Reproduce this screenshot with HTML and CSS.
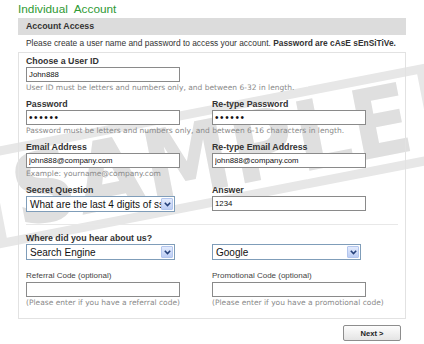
FILE: index.html
```html
<!DOCTYPE html>
<html>
<head>
  <title>Individual Account</title>
  <link rel="stylesheet" href="styles.css">
</head>
<body>
  <!-- Stamp behind the form -->
  <div class="watermark"><span>SAMPLE</span></div>

  <div class="page">
    <h1 class="page-title">Individual&nbsp; Account</h1>

    <div class="section">
      <div class="section-head">Account Access</div>
      <p class="intro">Please create a user name and password to access your account. <b>Password are cAsE sEnSiTiVe.</b></p>

      <div class="panel">
        <div class="row">
          <div class="field">
            <label>Choose a User ID</label>
            <input type="text" value="John888">
          </div>
          <div class="hint wide">User ID must be letters and numbers only, and between 6-32 in length.</div>
        </div>

        <div class="row">
          <div class="field">
            <label>Password</label>
            <input type="password" value="123456">
          </div>
          <div class="field">
            <label>Re-type Password</label>
            <input type="password" value="123456">
          </div>
          <div class="hint wide">Password must be letters and numbers only, and between 6-16 characters in length.</div>
        </div>

        <div class="row">
          <div class="field">
            <label>Email Address</label>
            <input type="text" value="john888@company.com">
          </div>
          <div class="field">
            <label>Re-type Email Address</label>
            <input type="text" value="john888@company.com">
          </div>
          <div class="hint wide">Example: yourname@company.com</div>
        </div>

        <div class="row">
          <div class="field">
            <label>Secret Question</label>
            <div class="select">
              <span class="select-text">What are the last 4 digits of ssn?</span>
              <span class="select-btn"><svg width="7" height="5" viewBox="0 0 7 5"><path d="M0.8 0.8l2.7 2.7l2.7-2.7" fill="none" stroke="#24407a" stroke-width="1.6"/></svg></span>
            </div>
          </div>
          <div class="field">
            <label>Answer</label>
            <input type="text" value="1234">
          </div>
        </div>

        <div class="divider"></div>

        <div class="row">
          <label class="wide">Where did you hear about us?</label>
          <div class="select">
            <span class="select-text">Search Engine</span>
            <span class="select-btn"><svg width="7" height="5" viewBox="0 0 7 5"><path d="M0.8 0.8l2.7 2.7l2.7-2.7" fill="none" stroke="#24407a" stroke-width="1.6"/></svg></span>
          </div>
          <div class="select">
            <span class="select-text">Google</span>
            <span class="select-btn"><svg width="7" height="5" viewBox="0 0 7 5"><path d="M0.8 0.8l2.7 2.7l2.7-2.7" fill="none" stroke="#24407a" stroke-width="1.6"/></svg></span>
          </div>
        </div>

        <div class="row optional">
          <div class="field">
            <label class="light">Referral Code (optional)</label>
            <input type="text" value="">
            <div class="hint">(Please enter if you have a referral code)</div>
          </div>
          <div class="field">
            <label class="light">Promotional Code (optional)</label>
            <input type="text" value="">
            <div class="hint">(Please enter if you have a promotional code)</div>
          </div>
        </div>
      </div>

      <div class="actions">
        <button type="button" class="next-btn">Next &gt;</button>
      </div>
    </div>
  </div>
</body>
</html>
```

FILE: styles.css
```css
/* Base */
* {
  box-sizing: border-box;
}

html, body {
  margin: 0;
  padding: 0;
  background: #fff;
  font-family: 'Liberation Sans', Arial, sans-serif;
  color: #333;
  overflow: hidden;
}

.page {
  position: relative;
  z-index: 1;
  width: 424px;
  padding: 0 18px;
}

/* Watermark stamp */
.watermark {
  position: absolute;
  left: -14px;
  top: 106px;
  width: 452px;
  height: 100px;
  border: 9px solid #e7e7e7;
  transform: rotate(-11deg);
  z-index: 0;
  display: flex;
  align-items: center;
  justify-content: center;
}

.watermark span {
  font-family: 'DejaVu Sans', sans-serif;
  font-weight: bold;
  font-size: 88px;
  line-height: 1;
  letter-spacing: 1px;
  color: #dfdfdf;
  transform: scaleY(1.1);
}

/* Title */
.page-title {
  margin: 0;
  height: 18px;
  font-size: 11.8px;
  line-height: 18px;
  font-weight: normal;
  color: #2f9a34;
}

/* Section */
.section-head {
  background: #dcdcdc;
  height: 17px;
  line-height: 17px;
  padding-left: 8px;
  font-size: 8.8px;
  font-weight: bold;
  color: #333;
}

.intro {
  margin: 0;
  padding: 2px 8px 0;
  height: 17px;
  font-size: 8.4px;
  line-height: 13px;
  white-space: nowrap;
  color: #333;
}

.panel {
  border: 1px solid #e2e2e2;
  padding: 2px 7px 9px;
}

.row {
  display: grid;
  grid-template-columns: 186px 186px;
  margin-bottom: 4px;
}

.row .wide {
  grid-column: 1 / -1;
}

.field label,
.row > label {
  display: block;
  font-size: 8.8px;
  font-weight: bold;
  line-height: 12px;
  color: #333;
}

.field label.light {
  font-weight: normal;
  font-size: 8px;
  color: #444;
}

input {
  display: block;
  width: 154px;
  height: 15px;
  margin: 0;
  padding: 0 2px;
  border: 1px solid #8a8a8a;
  background: #fff;
  font-family: 'Liberation Sans', Arial, sans-serif;
  font-size: 7.8px;
  color: #111;
  outline: none;
}

input[type="password"] {
  font-size: 10px;
  letter-spacing: 1.6px;
}

.hint {
  font-family: 'DejaVu Sans', Verdana, sans-serif;
  font-size: 7.5px;
  line-height: 12px;
  white-space: nowrap;
  color: #8a8a8a;
}

/* Fake XP style select */
.select {
  display: flex;
  align-items: center;
  width: 149px;
  height: 16px;
  border: 1px solid #7f9db9;
  background: #fff;
}

.select-text {
  flex: 1;
  overflow: hidden;
  white-space: nowrap;
  padding-left: 3px;
  font-size: 10px;
  color: #111;
}

.select-btn {
  width: 12px;
  height: 12px;
  margin-right: 1px;
  display: flex;
  align-items: center;
  justify-content: center;
  background: linear-gradient(#e3ebfd, #bccdf4);
  border: 1px solid #b3c6ee;
  border-radius: 1px;
}

.divider {
  height: 1px;
  background: #e8e8e8;
  margin: 12px 0 7px;
}

.optional {
  margin-top: 10px;
  margin-bottom: 0;
}

/* Actions */
.actions {
  display: flex;
  justify-content: flex-end;
  padding: 6px 5px 0 0;
}

.next-btn {
  width: 58px;
  height: 16px;
  padding: 0;
  border: 1px solid #8d8d8d;
  border-radius: 2px;
  background: linear-gradient(#fdfdfd, #e4e4e4);
  font-family: 'Liberation Sans', Arial, sans-serif;
  font-size: 7.6px;
  font-weight: bold;
  color: #222;
}
```
